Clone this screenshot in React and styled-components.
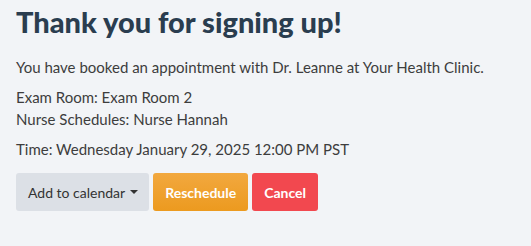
import React from "react"
import styled, { createGlobalStyle } from "styled-components"

const GlobalStyle = createGlobalStyle`
  html, body {
    margin: 0;
    padding: 0;
    background: #f2f4f7;
  }
  body {
    font-family: Lato, "Open Sans", "Liberation Sans", sans-serif;
    color: #3d3d3d;
  }
`

const Page = styled.div`
  padding: 2px 16px 16px;
`

const Title = styled.h1`
  margin: 0 0 14px;
  font-size: 29px;
  font-weight: 900;
  line-height: 40px;
  color: #2a3d4f;
`

const Para = styled.p`
  margin: 0 0 8px;
  font-size: 15px;
  line-height: 22px;
`

const Actions = styled.div`
  display: flex;
  gap: 4px;
  margin-top: 13px;
`

const Button = styled.button`
  display: flex;
  align-items: center;
  gap: 5px;
  height: 38px;
  padding: 0 ${(p) => (p.$variant === "light" ? "11px 0 12px" : "12px")};
  border: none;
  border-radius: 3px;
  font-family: inherit;
  font-size: 14px;
  font-weight: ${(p) => (p.$variant === "light" ? 400 : 700)};
  color: ${(p) => (p.$variant === "light" ? "#333" : "#fff")};
  background: ${(p) =>
    p.$variant === "warning"
      ? "linear-gradient(#f2a83f, #ec9a1f)"
      : p.$variant === "danger"
      ? "#f2484f"
      : "#dce0e6"};
  cursor: pointer;
`

const Caret = styled.span`
  width: 0;
  height: 0;
  border-left: 4px solid transparent;
  border-right: 4px solid transparent;
  border-top: 4px solid #333;
`

export default function App() {
  return (
    <>
      <GlobalStyle />
      <Page>
        <Title>Thank you for signing up!</Title>
        <Para>You have booked an appointment with Dr. Leanne at Your Health Clinic.</Para>
        <Para>
          Exam Room: Exam Room 2
          <br />
          Nurse Schedules: Nurse Hannah
        </Para>
        <Para>Time: Wednesday January 29, 2025 12:00 PM PST</Para>
        <Actions>
          <Button $variant="light">
            Add to calendar <Caret />
          </Button>
          <Button $variant="warning">Reschedule</Button>
          <Button $variant="danger">Cancel</Button>
        </Actions>
      </Page>
    </>
  )
}
